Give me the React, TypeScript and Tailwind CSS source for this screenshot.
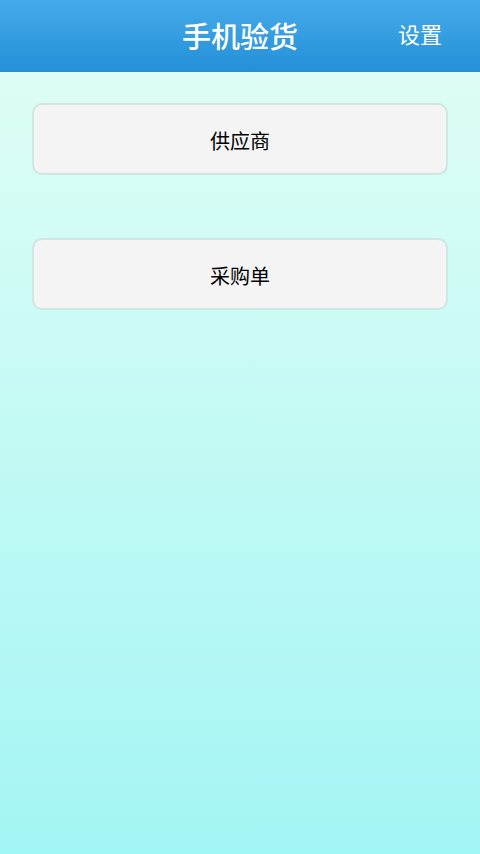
import React from "react";

const font = { fontFamily: '"Noto Sans CJK SC", "Noto Sans", sans-serif' };

function MenuButton({ label }: { label: string }) {
  return (
    <button
      type="button"
      className="flex h-[72px] w-full items-center justify-center rounded-[10px] border-2 border-[#cfe6e2] bg-[#f4f4f4] pt-[3px] text-[20px] text-black"
    >
      {label}
    </button>
  );
}

export default function App() {
  return (
    <div
      style={font}
      className="flex min-h-[854px] w-[480px] flex-col bg-gradient-to-b from-[#e2fdf6] via-[#c4faf4] to-[#a2f5f5]"
    >
      {/* Header */}
      <header className="relative flex h-[72px] items-center justify-center bg-gradient-to-b from-[#45aae9] to-[#2290d8]">
        <h1 className="pb-[1px] text-[29px] font-medium text-white">手机验货</h1>
        <span className="absolute right-[38px] top-[17px] text-[22px] text-white">设置</span>
      </header>

      {/* Menu */}
      <div className="flex flex-col gap-[63px] px-[32px] pt-[31px]">
        <MenuButton label="供应商" />
        <MenuButton label="采购单" />
      </div>
    </div>
  );
}
